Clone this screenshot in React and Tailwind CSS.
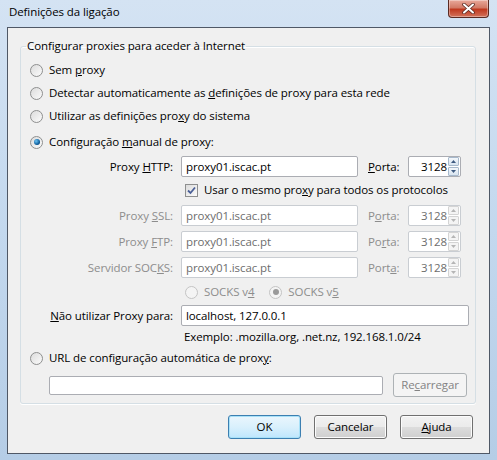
import React from 'react';

const font = { fontFamily: '"Open Sans", "Noto Sans", sans-serif' };

function Radio({ checked, disabled }) {
  return (
    <span
      className={`relative flex h-[13px] w-[13px] shrink-0 items-center justify-center rounded-full border ${
        disabled ? 'border-[#c4c4c4] bg-[#f4f4f4]' : 'border-[#8e8f8f] bg-gradient-to-br from-[#dcdcdc] to-[#fbfbfb]'
      }`}
    >
      {checked && (
        <span
          className={`h-[6px] w-[6px] rounded-full ${
            disabled ? 'bg-[#9a9a9a]' : 'bg-[radial-gradient(circle_at_35%_35%,#6cc4f5,#0b5a98_65%,#072f52)]'
          }`}
        />
      )}
    </span>
  );
}

function Check() {
  return (
    <span className="flex h-[13px] w-[13px] shrink-0 items-center justify-center border border-[#8e8f8f] bg-gradient-to-br from-[#dcdcdc] to-[#fbfbfb]">
      <svg width="9" height="9" viewBox="0 0 9 9">
        <path d="M1 4.5 L3.5 7 L8 1.5" fill="none" stroke="#4a5f97" strokeWidth="1.8" />
      </svg>
    </span>
  );
}

function TextBox({ value, disabled, className }) {
  return (
    <div
      className={`flex h-[21px] items-center whitespace-nowrap rounded-[2px] border bg-white px-[4px] ${
        disabled ? 'border-[#c9cdd2] text-[#6d6d6d]' : 'border-[#abadb3] text-black'
      } ${className}`}
    >
      {value}
    </div>
  );
}

function Spin({ disabled }) {
  const c = disabled ? 'border-[#d4d4d4] bg-[#f4f4f4]' : 'border-[#a7b9cc] bg-gradient-to-b from-[#f3f7fb] to-[#d8e4f0]';
  const a = disabled ? '#b5b5b5' : '#3d5a80';
  return (
    <div className="flex h-[19px] w-[11px] flex-col gap-[1px]">
      <div className={`flex flex-1 items-center justify-center rounded-[1px] border ${c}`}>
        <svg width="5" height="3" viewBox="0 0 5 3"><path d="M0 3 L2.5 0 L5 3Z" fill={a} /></svg>
      </div>
      <div className={`flex flex-1 items-center justify-center rounded-[1px] border ${c}`}>
        <svg width="5" height="3" viewBox="0 0 5 3"><path d="M0 0 L2.5 3 L5 0Z" fill={a} /></svg>
      </div>
    </div>
  );
}

function PortBox({ disabled }) {
  return (
    <div
      className={`flex h-[21px] w-[53px] items-center justify-end gap-[1px] rounded-[2px] border bg-white pr-[1px] ${
        disabled ? 'border-[#c9cdd2] text-[#6d6d6d]' : 'border-[#abadb3] text-black'
      }`}
    >
      <span>3128</span>
      <Spin disabled={disabled} />
    </div>
  );
}

function Btn({ children, focused, disabled, className }) {
  return (
    <div
      className={`flex items-center justify-center rounded-[3px] border ${
        focused
          ? 'border-[#3c7fb1] bg-gradient-to-b from-[#eaf6fd] via-[#d9f0fc] to-[#bee6fd] shadow-[inset_0_0_0_1px_#a8e1f8]'
          : disabled
          ? 'border-[#adb2b5] bg-[#f4f4f4] text-[#838383]'
          : 'border-[#707070] bg-[linear-gradient(#f2f2f2,#ebebeb_50%,#dddddd_50%,#cfcfcf)] shadow-[inset_0_0_0_1px_#fcfcfc]'
      } ${className}`}
    >
      {children}
    </div>
  );
}

function FieldRow({ label, value, portLabel, disabled }) {
  const lc = disabled ? 'text-[#8d8d8d]' : 'text-black';
  return (
    <div className="flex h-[21px] items-center">
      <div className={`w-[124px] whitespace-nowrap text-right ${lc}`}>{label}</div>
      <TextBox value={value} disabled={disabled} className="ml-[8px] w-[177px]" />
      <div className={`ml-[10px] w-[40px] ${lc}`}>{portLabel}</div>
      <PortBox disabled={disabled} />
    </div>
  );
}

export default function App() {
  return (
    <div
      className="relative h-[460px] w-[497px] overflow-hidden bg-gradient-to-b from-[#d4e3f3] via-[#c3d8ee] to-[#b5cde6] text-[11.5px] leading-[16px] tracking-[-0.1px] text-black"
      style={font}
    >
      {/* title bar */}
      <div className="flex h-[27px] items-start">
        <div className="ml-[9px] mt-[4px] text-black">Definições da ligação</div>
        <div className="ml-auto mr-[8px] flex h-[18px] w-[41px] items-center justify-center rounded-b-[4px] border border-t-0 border-[#5a2a22] bg-[linear-gradient(#e9a99b,#d27a66_45%,#c0391f_55%,#d3735c)] shadow-[inset_0_0_0_1px_rgba(255,255,255,0.35)]">
          <svg width="13" height="11" viewBox="0 0 13 11">
            <path d="M2 1.5 L11 9.5 M11 1.5 L2 9.5" stroke="#5b2a22" strokeWidth="3.6" strokeLinecap="round" />
            <path d="M2 1.5 L11 9.5 M11 1.5 L2 9.5" stroke="#ffffff" strokeWidth="2" strokeLinecap="round" />
          </svg>
        </div>
      </div>

      {/* client area */}
      <div className="mx-[7px] flex h-[427px] flex-col border border-[#4f5866] bg-[#f0f0f0]">
        <fieldset className="ml-[12px] mr-[13px] mt-[10px] rounded-[3px] border border-[#d5dfe5] pb-[6px] pl-[9px] shadow-[0_1px_0_#fff,inset_0_1px_0_#fff]">
          <legend className="ml-[-4px] px-[1px] leading-[16px]">Configurar proxies para aceder à Internet</legend>

          <div className="mt-[6px] flex h-[20px] items-center gap-[6px]">
            <Radio />
            <span>Sem <u>p</u>roxy</span>
          </div>
          <div className="mt-[3px] flex h-[20px] items-center gap-[6px]">
            <Radio />
            <span>Detectar automaticamente as <u>d</u>efinições de proxy para esta rede</span>
          </div>
          <div className="mt-[3px] flex h-[20px] items-center gap-[6px]">
            <Radio />
            <span>Utilizar as definições pro<u>x</u>y do sistema</span>
          </div>
          <div className="mt-[6px] flex h-[20px] items-center gap-[6px]">
            <Radio checked />
            <span>Configuração <u>m</u>anual de proxy:</span>
          </div>

          <div className="pl-[19px]">
            <div className="mt-[4px]">
              <FieldRow label={<>Proxy <u>H</u>TTP:</>} value="proxy01.iscac.pt" portLabel={<><u>P</u>orta:</>} />
            </div>
            <div className="mt-[3px] flex h-[20px] items-center gap-[6px] pl-[136px]">
              <Check />
              <span>Usar o mesmo pro<u>x</u>y para todos os protocolos</span>
            </div>
            <div className="mt-[5px]">
              <FieldRow disabled label={<>Proxy <u>S</u>SL:</>} value="proxy01.iscac.pt" portLabel={<>P<u>o</u>rta:</>} />
            </div>
            <div className="mt-[5px]">
              <FieldRow disabled label={<>Proxy <u>F</u>TP:</>} value="proxy01.iscac.pt" portLabel={<>Po<u>r</u>ta:</>} />
            </div>
            <div className="mt-[5px]">
              <FieldRow
                disabled
                label={<>Servidor SOC<u>K</u>S:</>}
                value="proxy01.iscac.pt"
                portLabel={<>Port<u>a</u>:</>}
              />
            </div>
            <div className="mt-[4px] flex h-[20px] items-center pl-[136px] text-[#8d8d8d]">
              <div className="flex items-center gap-[6px]">
                <Radio disabled />
                <span>SOCKS v<u>4</u></span>
              </div>
              <div className="ml-[15px] flex items-center gap-[6px]">
                <Radio disabled checked />
                <span>SOCKS v<u>5</u></span>
              </div>
            </div>
            <div className="mt-[3px] flex h-[21px] items-center">
              <div className="w-[124px] whitespace-nowrap text-right">
                <u>N</u>ão utilizar Proxy para:
              </div>
              <TextBox value="localhost, 127.0.0.1" className="ml-[8px] w-[288px]" />
            </div>
            <div className="mt-[1px] flex h-[20px] items-center pl-[135px]">
              Exemplo: .mozilla.org, .net.nz, 192.168.1.0/24
            </div>
          </div>

          <div className="mt-[1px] flex h-[20px] items-center gap-[6px]">
            <Radio />
            <span>URL de configuração automática de prox<u>y</u>:</span>
          </div>
          <div className="mt-[5px] flex h-[24px] items-center pl-[19px]">
            <div className="h-[19px] w-[334px] rounded-[2px] border border-[#abadb3] bg-white" />
            <Btn disabled className="ml-[10px] h-[24px] w-[74px]">
              Re<u>c</u>arregar
            </Btn>
          </div>
        </fieldset>

        <div className="mr-[16px] mt-[11px] flex justify-end gap-[13px]">
          <Btn focused className="h-[24px] w-[73px]">OK</Btn>
          <Btn className="h-[24px] w-[73px]">Cancelar</Btn>
          <Btn className="h-[24px] w-[73px]">
            <u>A</u>juda
          </Btn>
        </div>
      </div>
    </div>
  );
}
